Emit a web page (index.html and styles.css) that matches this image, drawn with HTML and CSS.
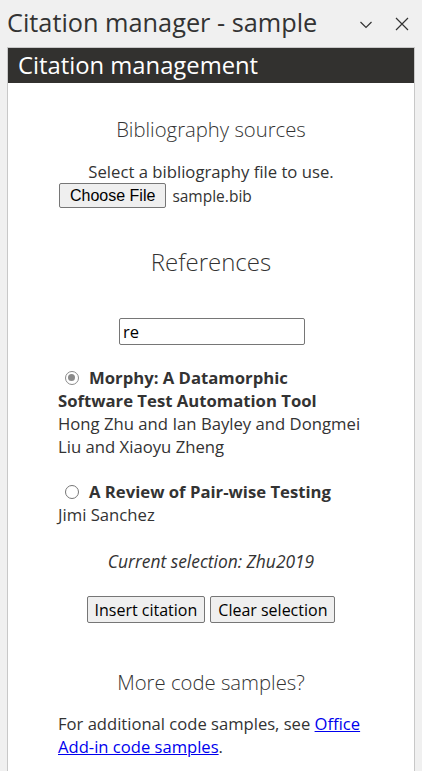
FILE: index.html
```html
<!DOCTYPE html>
<html lang="en">
<head>
<meta charset="utf-8">
<title>Citation manager - sample</title>
<link rel="stylesheet" href="styles.css">
</head>
<body>
<header class="pane-header">
  <h1 class="pane-title">Citation manager - sample</h1>
  <div class="pane-actions">
    <svg class="icon chevron" width="12" height="8" viewBox="0 0 12 8"><path d="M0.5 1 L6 6.5 L11.5 1" fill="none" stroke="#333" stroke-width="1.2"/></svg>
    <svg class="icon close" width="14" height="14" viewBox="0 0 14 14"><path d="M1 1 L13 13 M13 1 L1 13" fill="none" stroke="#333" stroke-width="1.2"/></svg>
  </div>
</header>
<main class="panel">
  <div class="panel-bar">Citation management</div>
  <div class="panel-body">
    <h2 class="section-title">Bibliography sources</h2>
    <p class="center-text">Select a bibliography file to use.</p>
    <div class="file-row">
      <button class="file-btn" type="button">Choose File</button>
      <span class="file-name">sample.bib</span>
    </div>
    <h2 class="refs-title">References</h2>
    <div class="search-row">
      <input class="search" type="text" value="re">
    </div>
    <div class="entry">
      <span class="radio checked"></span><span class="entry-title">Morphy: A Datamorphic Software Test Automation Tool</span>
      <div class="entry-authors">Hong Zhu and Ian Bayley and Dongmei Liu and Xiaoyu Zheng</div>
    </div>
    <div class="entry second">
      <span class="radio"></span><span class="entry-title">A Review of Pair-wise Testing</span>
      <div class="entry-authors">Jimi Sanchez</div>
    </div>
    <p class="selection">Current selection: Zhu2019</p>
    <div class="actions">
      <button class="btn" type="button">Insert citation</button>
      <button class="btn" type="button">Clear selection</button>
    </div>
    <h2 class="section-title more">More code samples?</h2>
    <p class="more-text">For additional code samples, see <a href="#">Office</a><br><a href="#">Add-in code samples</a>.</p>
  </div>
</main>
</body>
</html>
```
FILE: styles.css
```css
html, body {
  margin: 0;
  padding: 0;
}
body {
  background: #f0f0f0;
  font-family: "Open Sans", "Noto Sans", sans-serif;
  color: #333;
  width: 422px;
  height: 771px;
  overflow: hidden;
}
.pane-header {
  height: 47px;
  display: flex;
  align-items: center;
  justify-content: space-between;
  padding: 0 0 0 7px;
}
.pane-title {
  margin: 0;
  font-size: 25.3px;
  font-weight: 400;
  color: #333;
  line-height: 34px;
  margin-top: -3px;
}
.pane-actions {
  display: flex;
  align-items: center;
  gap: 23px;
  padding-right: 13px;
}
.icon { display: block; }
.chevron { margin-top: 2px; }
.panel {
  margin: 0 7px 0 7px;
  border: 1px solid #c8c8c8;
  border-bottom: none;
  background: #fff;
  height: 724px;
}
.panel-bar {
  background: #32312f;
  color: #fff;
  font-size: 23.8px;
  height: 35px;
  line-height: 35px;
  padding-left: 10px;
}
.panel-body {
  padding: 0 50px;
}
.section-title {
  margin: 32px 0 0;
  font-size: 20.3px;
  font-weight: 300;
  line-height: 28px;
  text-align: center;
}
.center-text {
  margin: 17px 0 0;
  font-size: 16.7px;
  line-height: 23px;
  text-align: center;
}
.file-row {
  display: flex;
  align-items: center;
  gap: 6px;
  font-size: 15.5px;
}
.file-btn {
  font-family: "Liberation Sans", Arial, sans-serif;
  font-size: 16px;
  color: #000;
  background: #efefef;
  border: 1px solid #767676;
  border-radius: 2px;
  height: 25px;
  padding: 0 10px;
  margin-left: 1px;
}
.refs-title {
  margin: 36px 0 0;
  font-size: 24px;
  font-weight: 300;
  line-height: 36px;
  text-align: center;
}
.search-row {
  margin-top: 38px;
  display: flex;
  justify-content: center;
}
.search {
  width: 186px;
  height: 27px;
  box-sizing: border-box;
  border: 1px solid #767676;
  border-radius: 2px;
  font-family: "Open Sans", sans-serif;
  font-size: 16.5px;
  color: #000;
  padding: 0 3px;
  margin-left: 2px;
}
.entry {
  margin-top: 21px;
  font-size: 16.7px;
  line-height: 23px;
}
.entry.second { margin-top: 22px; }
.radio {
  display: inline-block;
  width: 14px;
  height: 14px;
  box-sizing: border-box;
  border: 1px solid #767676;
  border-radius: 50%;
  margin: 0 10px 0 7px;
  vertical-align: -1px;
  position: relative;
}
.radio.checked {
  border: 1.5px solid #8a8a8a;
}
.radio.checked::after {
  content: "";
  position: absolute;
  left: 2px;
  top: 2px;
  width: 7px;
  height: 7px;
  border-radius: 50%;
  background: #8a8a8a;
}
.entry-title {
  font-weight: 700;
}
.selection {
  margin: 24px 0 0;
  font-size: 17.4px;
  line-height: 23px;
  font-style: italic;
  text-align: center;
}
.actions {
  margin-top: 23px;
  display: flex;
  justify-content: center;
  gap: 5px;
}
.btn {
  font-family: "Open Sans", sans-serif;
  font-size: 16px;
  color: #000;
  background: #efefef;
  border: 1px solid #767676;
  border-radius: 2px;
  height: 27px;
  padding: 0 7px;
}
.section-title.more {
  margin-top: 45px;
}
.more-text {
  margin: 16px 0 0;
  font-size: 16.6px;
  line-height: 23px;
}
.more-text a {
  color: #0000ee;
}
```
